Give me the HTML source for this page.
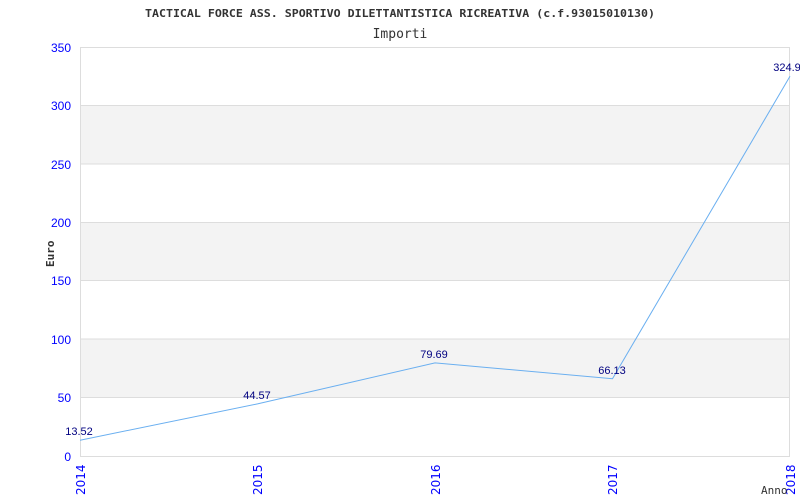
<!DOCTYPE html>
<html><head><style>body{margin:0;background:#fff;}svg{display:block}</style></head><body>
<svg width="800" height="500" xmlns="http://www.w3.org/2000/svg" font-family="Liberation Sans, sans-serif">
<rect width="800" height="500" fill="#fff"/>
<text x="145" y="17" textLength="510" lengthAdjust="spacingAndGlyphs" font-family="DejaVu Sans Mono, monospace" font-size="11" font-weight="bold" fill="#333">TACTICAL FORCE ASS. SPORTIVO DILETTANTISTICA RICREATIVA (c.f.93015010130)</text>
<text x="400" y="38" text-anchor="middle" font-family="DejaVu Sans Mono, monospace" font-size="13" fill="#333">Importi</text>
<rect x="80" y="105.4" width="710" height="58.5" fill="#f3f3f3"/>
<rect x="80" y="222.3" width="710" height="58.4" fill="#f3f3f3"/>
<rect x="80" y="339.1" width="710" height="58.5" fill="#f3f3f3"/>
<g stroke="#ddd" stroke-width="1">
<line x1="80" y1="47.5" x2="790" y2="47.5"/>
<line x1="80" y1="105.5" x2="790" y2="105.5"/>
<line x1="80" y1="164" x2="790" y2="164"/>
<line x1="80" y1="222.5" x2="790" y2="222.5"/>
<line x1="80" y1="280.5" x2="790" y2="280.5"/>
<line x1="80" y1="339" x2="790" y2="339"/>
<line x1="80" y1="397.5" x2="790" y2="397.5"/>
<line x1="80" y1="456.5" x2="790" y2="456.5"/>
<line x1="80.5" y1="47" x2="80.5" y2="456"/>
<line x1="789.5" y1="47" x2="789.5" y2="456"/>
</g>
<g fill="#00f" font-size="12" text-anchor="end">
<text x="71" y="52">350</text><text x="71" y="110">300</text><text x="71" y="169">250</text>
<text x="71" y="227">200</text><text x="71" y="285">150</text><text x="71" y="344">100</text>
<text x="71" y="402">50</text><text x="71" y="461">0</text>
</g>
<g fill="#00f" font-size="12" font-family="DejaVu Sans, sans-serif">
<text transform="translate(85,495) rotate(-90)">2014</text>
<text transform="translate(262,495) rotate(-90)">2015</text>
<text transform="translate(440,495) rotate(-90)">2016</text>
<text transform="translate(617,495) rotate(-90)">2017</text>
<text transform="translate(795,495) rotate(-90)">2018</text>
</g>
<text transform="translate(54,267) rotate(-90)" font-family="DejaVu Sans Mono, monospace" font-size="11" font-weight="bold" fill="#333">Euro</text>
<text x="761" y="494" font-family="DejaVu Sans Mono, monospace" font-size="11" fill="#333">Anno</text>
<polyline points="80,440.2 257.5,403.9 435,362.9 612.5,378.7 790,76.3" fill="none" stroke="#6aaff0" stroke-width="1"/>
<g fill="#000080" font-size="11" text-anchor="middle">
<text x="79" y="435">13.52</text>
<text x="257" y="399">44.57</text>
<text x="434" y="358">79.69</text>
<text x="612" y="374">66.13</text>
<text x="787" y="71">324.9</text>
</g>
</svg>
</body></html>
